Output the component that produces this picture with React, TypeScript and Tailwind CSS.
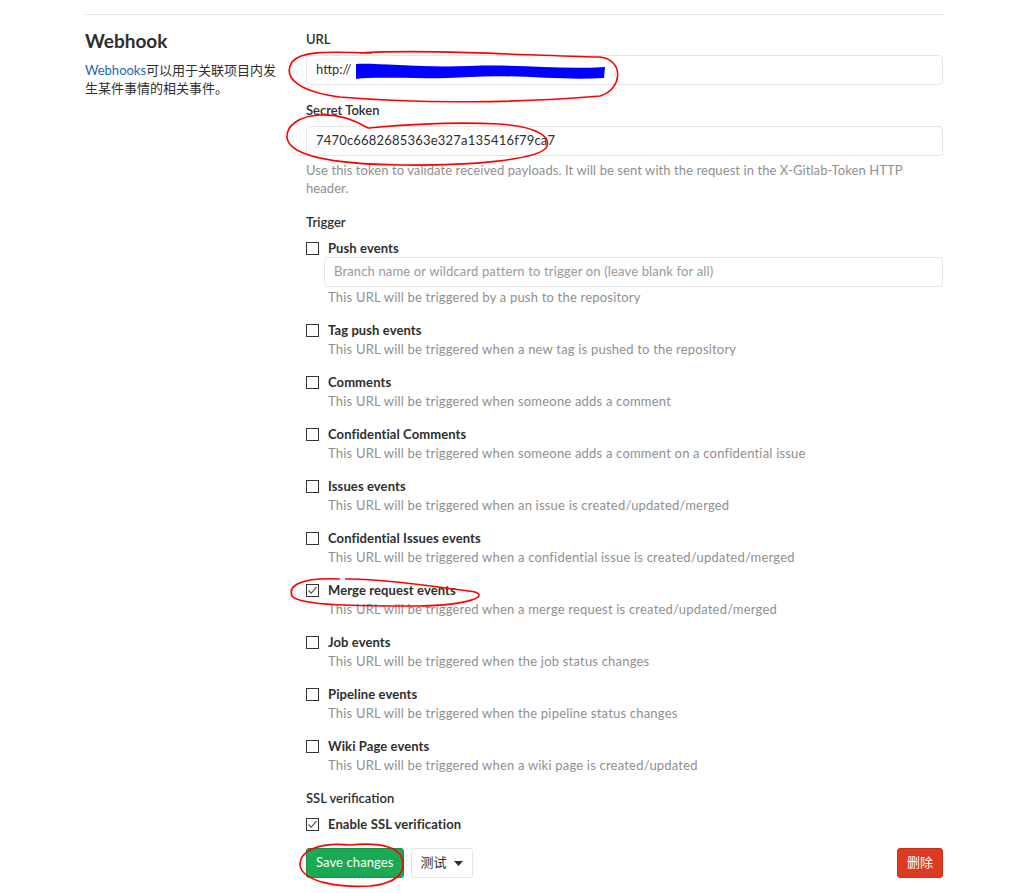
import React from "react";

const FONT = { fontFamily: 'Lato, "Noto Sans CJK SC", sans-serif' };

function Checkbox({ checked }: { checked?: boolean }) {
  return (
    <span className="mt-[3px] flex h-[13px] w-[13px] shrink-0 items-center justify-center border border-[#333] bg-white">
      {checked && (
        <svg width="11" height="11" viewBox="0 0 11 11">
          <path d="M1.5 5.5 L4.2 8.2 L9.5 2.2" fill="none" stroke="#555" strokeWidth="1.2" />
        </svg>
      )}
    </span>
  );
}

type Item = { label: string; help: string; checked?: boolean; branch?: boolean };

const items: Item[] = [
  { label: "Push events", help: "This URL will be triggered by a push to the repository", branch: true },
  { label: "Tag push events", help: "This URL will be triggered when a new tag is pushed to the repository" },
  { label: "Comments", help: "This URL will be triggered when someone adds a comment" },
  { label: "Confidential Comments", help: "This URL will be triggered when someone adds a comment on a confidential issue" },
  { label: "Issues events", help: "This URL will be triggered when an issue is created/updated/merged" },
  { label: "Confidential Issues events", help: "This URL will be triggered when a confidential issue is created/updated/merged" },
  { label: "Merge request events", help: "This URL will be triggered when a merge request is created/updated/merged", checked: true },
  { label: "Job events", help: "This URL will be triggered when the job status changes" },
  { label: "Pipeline events", help: "This URL will be triggered when the pipeline status changes" },
  { label: "Wiki Page events", help: "This URL will be triggered when a wiki page is created/updated" },
];

function TriggerItem({ item }: { item: Item }) {
  return (
    <div className="flex gap-[9px]">
      <Checkbox checked={item.checked} />
      <div className="flex-1">
        <div className="text-[13px] font-bold leading-[18px] tracking-[0.1px] text-[#2e2e2e]">{item.label}</div>
        {item.branch && (
          <div className="-ml-[4px] flex h-[30px] items-center rounded-[4px] border border-[#e5e5e5] px-[9px] text-[13px] tracking-[0.15px] text-[#999]">
            Branch name or wildcard pattern to trigger on (leave blank for all)
          </div>
        )}
        <div className="mt-[1px] text-[13px] leading-[18px] tracking-[0.2px] text-[#8f8f8f]">{item.help}</div>
      </div>
    </div>
  );
}

export default function App() {
  return (
    <div className="relative h-[893px] w-[1032px] overflow-hidden bg-white text-[#2e2e2e]" style={FONT}>
      <div className="pl-[85px] pr-[89px]">
        <div className="mt-[14px] border-t border-[#e5e5e5]" />
        <div className="flex pt-[15px]">
          <div className="w-[221px] shrink-0">
            <h4 className="mt-[-1px] text-[19px] font-bold leading-[24px] text-[#2e2e2e]">Webhook</h4>
            <p className="mt-[8px] w-[196px] text-[13px] leading-[18px] text-[#2e2e2e]">
              <span className="text-[#1b69b6]">Webhooks</span>
              可以用于关联项目内发生某件事情的相关事件。
            </p>
          </div>
          <div className="flex-1">
            <div className="text-[13px] font-semibold leading-[18px]">URL</div>
            <div className="mt-[7px] flex h-[30px] items-center rounded-[4px] border border-[#e5e5e5] px-[9px] text-[13px]">
              http://
            </div>
            <div className="mt-[16px] text-[13px] font-semibold leading-[18px]">Secret Token</div>
            <div className="mt-[7px] flex h-[30px] items-center rounded-[4px] border border-[#e5e5e5] px-[9px] text-[13px] tracking-[0.2px]">
              7470c6682685363e327a135416f79ca7
            </div>
            <p className="mt-[5px] text-[13px] leading-[18px] tracking-[0.08px] text-[#8f8f8f]">
              Use this token to validate received payloads. It will be sent with the request in the X-Gitlab-Token HTTP
              <br />
              header.
            </p>
            <div className="mt-[16px] text-[13px] font-semibold leading-[18px]">Trigger</div>
            <div className="mt-[8px] flex flex-col gap-[15px]">
              {items.map((it) => (
                <TriggerItem key={it.label} item={it} />
              ))}
            </div>
            <div className="mt-[15px] text-[13px] font-semibold leading-[18px]">SSL verification</div>
            <div className="mt-[8px] flex gap-[9px]">
              <Checkbox checked />
              <div className="text-[13px] font-bold leading-[18px] tracking-[0.1px]">Enable SSL verification</div>
            </div>
            <div className="mt-[15px] flex items-center">
              <button className="h-[30px] rounded-[3px] border border-[#168f48] bg-[#1aaa55] px-[9px] text-[13px] tracking-[0.1px] text-white">
                Save changes
              </button>
              <button className="ml-[7px] flex h-[30px] items-center gap-[7px] rounded-[3px] border border-[#e5e5e5] bg-white px-[9px] text-[13px] text-[#2e2e2e]">
                测试
                <svg width="9" height="5" viewBox="0 0 9 5">
                  <path d="M0 0 L9 0 L4.5 5 Z" fill="#2e2e2e" />
                </svg>
              </button>
              <div className="flex-1" />
              <button className="h-[30px] rounded-[3px] border border-[#d22f1a] bg-[#db3b21] px-[9px] text-[13px] text-white">
                删除
              </button>
            </div>
          </div>
        </div>
      </div>

      <svg className="pointer-events-none absolute left-0 top-0" width="1032" height="893" viewBox="0 0 1032 893">
        <path
          d="M356 64 C380 63 420 68 470 66 C520 64 560 70 605 67 L604 78 C560 81 520 74 470 77 C420 80 380 76 356 79 Z"
          fill="#0000ff"
        />
        <path
          d="M360 53 C420 49 520 55 600 57 C625 60 622 90 600 96 C520 103 420 104 340 97 C300 92 282 78 292 62 C302 50 330 52 372 53"
          fill="none"
          stroke="#ff0000"
          strokeWidth="1.6"
        />
        <path
          d="M368 128 C390 126 440 121 500 124 C540 127 552 138 546 148 C535 160 470 166 400 165 C330 164 290 155 287 138 C286 125 300 116 320 115 C340 114 355 120 368 128"
          fill="none"
          stroke="#ff0000"
          strokeWidth="1.6"
        />
        <path
          d="M340 579 C300 577 288 586 292 596 C300 606 360 606 420 606 C470 605 488 596 475 592 C440 587 380 578 345 579"
          fill="none"
          stroke="#ff0000"
          strokeWidth="1.6"
        />
        <path
          d="M350 845 C320 842 300 850 300 865 C302 882 340 888 370 886 C400 883 406 870 402 858 C398 847 380 842 350 845"
          fill="none"
          stroke="#ff0000"
          strokeWidth="1.6"
        />
      </svg>
    </div>
  );
}
